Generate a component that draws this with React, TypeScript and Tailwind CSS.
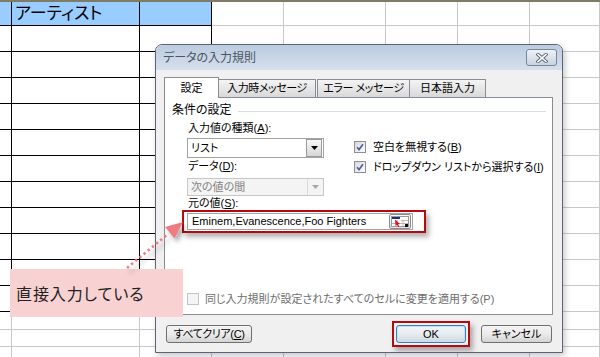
import React from 'react';

const FONT = "font-['Liberation_Sans','Noto_Sans_CJK_JP',sans-serif] [font-feature-settings:'palt']";

const COL_COUNT = 8;
const ROW_H = [
  'h-[24px]',
  'h-[26px]', 'h-[26px]', 'h-[26px]', 'h-[26px]', 'h-[26px]', 'h-[26px]',
  'h-[26px]', 'h-[26px]', 'h-[26px]', 'h-[26px]', 'h-[26px]',
  'h-[18px]', 'h-[17px]', 'h-[17px]',
];

const Sheet = () => (
  <div className="w-[600px]">
    <div className="h-[2px] bg-[#7e7c66]" />
    {ROW_H.map((h, r) => (
      <div key={r} className={`grid grid-cols-[12px_128px_72px_72px_102px_72px_72px_70px] ${h}`}>
        {Array.from({ length: COL_COUNT }).map((_, c) => {
          const dark = r <= 11 && c <= 2;
          return (
            <div
              key={c}
              className={`border-r border-b flex items-center ${dark ? 'border-black' : 'border-[#c8c8c8]'} ${r === 0 && c <= 2 ? 'bg-[#99ccff]' : 'bg-white'}`}
            >
              {r === 0 && c === 1 && <span className="pl-[3px] text-[17px] text-black leading-none">アーティスト</span>}
            </div>
          );
        })}
      </div>
    ))}
  </div>
);

const Check = ({ checked, disabled }: { checked?: boolean; disabled?: boolean }) => (
  <span
    className={
      disabled
        ? 'w-[12px] h-[12px] border border-[#c4c4c4] bg-[#f4f4f4] shrink-0'
        : 'w-[12px] h-[12px] border border-[#8e8f8f] bg-gradient-to-br from-[#d8d8d8] to-white flex items-center justify-center shrink-0'
    }
  >
    {checked && (
      <svg width="8" height="8" viewBox="0 0 8 8">
        <path d="M1 4.3 L3 6.6 L7 1.2" fill="none" stroke="#4c62a2" strokeWidth="1.7" />
      </svg>
    )}
  </span>
);

const Arrow = ({ color }: { color: string }) => (
  <svg width="7" height="4" viewBox="0 0 7 4">
    <path d="M0 0 H7 L3.5 4 Z" fill={color} />
  </svg>
);

const U = ({ children }: { children: React.ReactNode }) => <span className="underline underline-offset-[1px]">{children}</span>;

const RangeIcon = () => (
  <div className="w-[22px] h-[15px] border border-[#8b8b8b] rounded-[2px] bg-gradient-to-b from-[#fafafa] to-[#e2e2e2] flex items-center justify-center">
    <svg width="18" height="11" viewBox="0 0 18 11">
      <rect x="0.5" y="0.5" width="17" height="10" fill="white" stroke="#9a9a9a" />
      <rect x="1" y="1" width="8" height="2" fill="#1f2f7a" />
      <path d="M10 4.5 H17 M1 7.5 H17 M6 4 V10 M12 4 V10" stroke="#b8b8b8" strokeWidth="1" />
      <path d="M4 3.5 L9 8 L7 8.3 L8.3 10.5 L7.2 11 L6 8.8 L4.6 10 Z" fill="#e01010" />
      <rect x="14" y="8" width="3" height="3" fill="#111" />
    </svg>
  </div>
);

const TAB_OFF = 'h-[18px] mb-px border-t border-[#898c95] bg-gradient-to-b from-[#f4f4f4] to-[#d9d9d9] flex items-center justify-center';

const Dialog = () => (
  <div className="absolute left-[155px] top-[44px] w-[408px] h-[309px] border border-[#5d6573] rounded-t-[7px] bg-[#f0f0f0] shadow-[2px_3px_6px_rgba(0,0,0,0.22)] flex flex-col overflow-hidden">
    {/* title bar */}
    <div className="h-[25px] shrink-0 bg-gradient-to-b from-[#bccbdf] to-[#d6e0ed] flex items-center pl-[7px] pr-[5px]">
      <span className="text-[12px] text-[#4a5666]">データの入力規則</span>
      <div className="ml-auto w-[31px] h-[17px] rounded-[3px] border border-[#7a8698] bg-gradient-to-b from-[#eef2f7] to-[#c9d3e0] flex items-center justify-center">
        <svg width="12" height="10" viewBox="0 0 12 10">
          <path d="M2 1.5 L10 8.5 M10 1.5 L2 8.5" stroke="#5a6473" strokeWidth="3.4" strokeLinecap="square" />
          <path d="M2 1.5 L10 8.5 M10 1.5 L2 8.5" stroke="white" strokeWidth="1.6" strokeLinecap="square" />
        </svg>
      </div>
    </div>

    {/* client */}
    <div className="flex flex-col px-[8px] pt-[7px] text-[11px] text-black whitespace-nowrap">
      {/* tabs */}
      <div className="flex items-end h-[21px] -mb-px relative z-10">
        <div className="w-[55px] h-[21px] bg-white border-t border-x border-[#898c95] flex items-center justify-center">設定</div>
        <div className={`w-[97px] border-r tracking-[-0.4px] ${TAB_OFF}`}>入力時メッセージ</div>
        <div className={`w-[93px] ml-[1px] border-x tracking-[-0.4px] ${TAB_OFF}`}>エラー メッセージ</div>
        <div className={`w-[76px] border-r ${TAB_OFF}`}>日本語入力</div>
      </div>

      {/* panel */}
      <div className="w-[389px] h-[218px] bg-white border border-[#898c95] flex flex-col">
        <div className="flex items-center h-[16px] mt-[4px] ml-[7px] mr-[6px]">
          <span className="text-[12px]">条件の設定</span>
          <div className="flex-1 h-px bg-[#d5dfe5] ml-[6px] mt-[2px]" />
        </div>

        <div className="flex ml-[22px] mt-[2px]">
          <div className="w-[137px] shrink-0 flex flex-col">
            <div className="h-[16px] pl-px flex items-center">入力値の種類(<U>A</U>):</div>
            <div className="mt-[2px] h-[20px] border border-[#a3a3a3] bg-white flex items-center">
              <span className="pl-[3px] flex-1">リスト</span>
              <div className="w-[16px] h-[18px] mr-px border border-[#9a9a9a] bg-gradient-to-b from-[#f8f8f8] to-[#d6d6d6] flex items-center justify-center">
                <Arrow color="#000" />
              </div>
            </div>
            <div className="h-[16px] pl-px flex items-center">データ(<U>D</U>):</div>
            <div className="mt-[4px] h-[18px] border border-[#c6c6c6] bg-[#f4f4f4] flex items-center text-[#838383]">
              <span className="pl-[3px] flex-1">次の値の間</span>
              <div className="w-[16px] h-full border-l border-[#dadada] flex items-center justify-center">
                <Arrow color="#a8a8a8" />
              </div>
            </div>
          </div>
          <div className="ml-[30px] mt-[17px] flex flex-col">
            <div className="h-[20px] flex items-center gap-[7px]">
              <Check checked />
              <span>空白を無視する(<U>B</U>)</span>
            </div>
            <div className="h-[20px] flex items-center gap-[7px]">
              <Check checked />
              <span>ドロップダウン リストから選択する(<U>I</U>)</span>
            </div>
          </div>
        </div>

        <div className="ml-[23px] h-[14px] flex items-center">元の値(<U>S</U>):</div>
        <div className="ml-[17px] w-[244px] border-2 border-[#b40a10] pl-[3px] pr-[11px] py-px shadow-[3px_4px_5px_rgba(0,0,0,0.3)]">
          <div className="w-[226px] h-[17px] border border-[#a3a3a3] bg-white flex items-center">
            <span className="pl-[4px] flex-1 text-[11px] font-['Liberation_Sans',sans-serif]">Eminem,Evanescence,Foo Fighters</span>
            <div className="mr-px">
              <RangeIcon />
            </div>
          </div>
        </div>

        <div className="mt-auto mb-[7px] ml-[22px] h-[16px] flex items-center gap-[6px] text-[#6d6d6d]">
          <Check disabled />
          <span>同じ入力規則が設定されたすべてのセルに変更を適用する(P)</span>
        </div>
      </div>

      {/* footer */}
      <div className="mt-[10px] h-[18px] w-[388px] pl-[2px] flex items-center">
        <div className="w-[86px] h-[18px] rounded-[3px] border border-[#707070] bg-gradient-to-b from-[#f4f4f4] via-[#ebebeb] to-[#d4d4d4] flex items-center justify-center tracking-[-0.4px]">
          すべてクリア(<U>C</U>)
        </div>
        <div className="ml-auto -my-[4px] border-2 border-[#b40a10] p-[2px] shadow-[3px_4px_5px_rgba(0,0,0,0.3)]">
          <div className="w-[70px] h-[18px] rounded-[3px] border border-[#3c7fb1] bg-gradient-to-b from-[#f2f6f9] via-[#e7ecf0] to-[#d0d7dd] shadow-[inset_0_0_0_1px_#bfe3f7] flex items-center justify-center">
            OK
          </div>
        </div>
        <div className="ml-[11px] w-[71px] h-[18px] rounded-[3px] border border-[#707070] bg-gradient-to-b from-[#f4f4f4] via-[#ebebeb] to-[#d4d4d4] flex items-center justify-center">
          キャンセル
        </div>
      </div>
    </div>
  </div>
);

const Callout = () => (
  <div className="absolute left-[10px] top-[269px] w-[173px] h-[48px] bg-[#f8d2d3] flex items-center pl-[6px] text-[16px] tracking-[0.9px] text-[#222] font-['Noto_Sans_CJK_JP',sans-serif]">
    直接入力している
  </div>
);

const Pointer = () => (
  <svg className="absolute left-0 top-0 pointer-events-none" width="600" height="357" viewBox="0 0 600 357">
    <defs>
      <filter id="sh" x="-50%" y="-50%" width="200%" height="200%">
        <feDropShadow dx="3" dy="4" stdDeviation="2" floodColor="#000" floodOpacity="0.3" />
      </filter>
    </defs>
    <g filter="url(#sh)">
      <line x1="127" y1="268" x2="168" y2="234" stroke="#ee7b82" strokeWidth="2.6" strokeDasharray="2.4 3" />
      <polygon points="183,222 174.5,238.5 165,227" fill="#ee7b82" />
    </g>
  </svg>
);

export default function App() {
  return (
    <div className={`relative w-[600px] h-[357px] overflow-hidden bg-white ${FONT}`}>
      <Sheet />
      <Dialog />
      <Callout />
      <Pointer />
    </div>
  );
}
